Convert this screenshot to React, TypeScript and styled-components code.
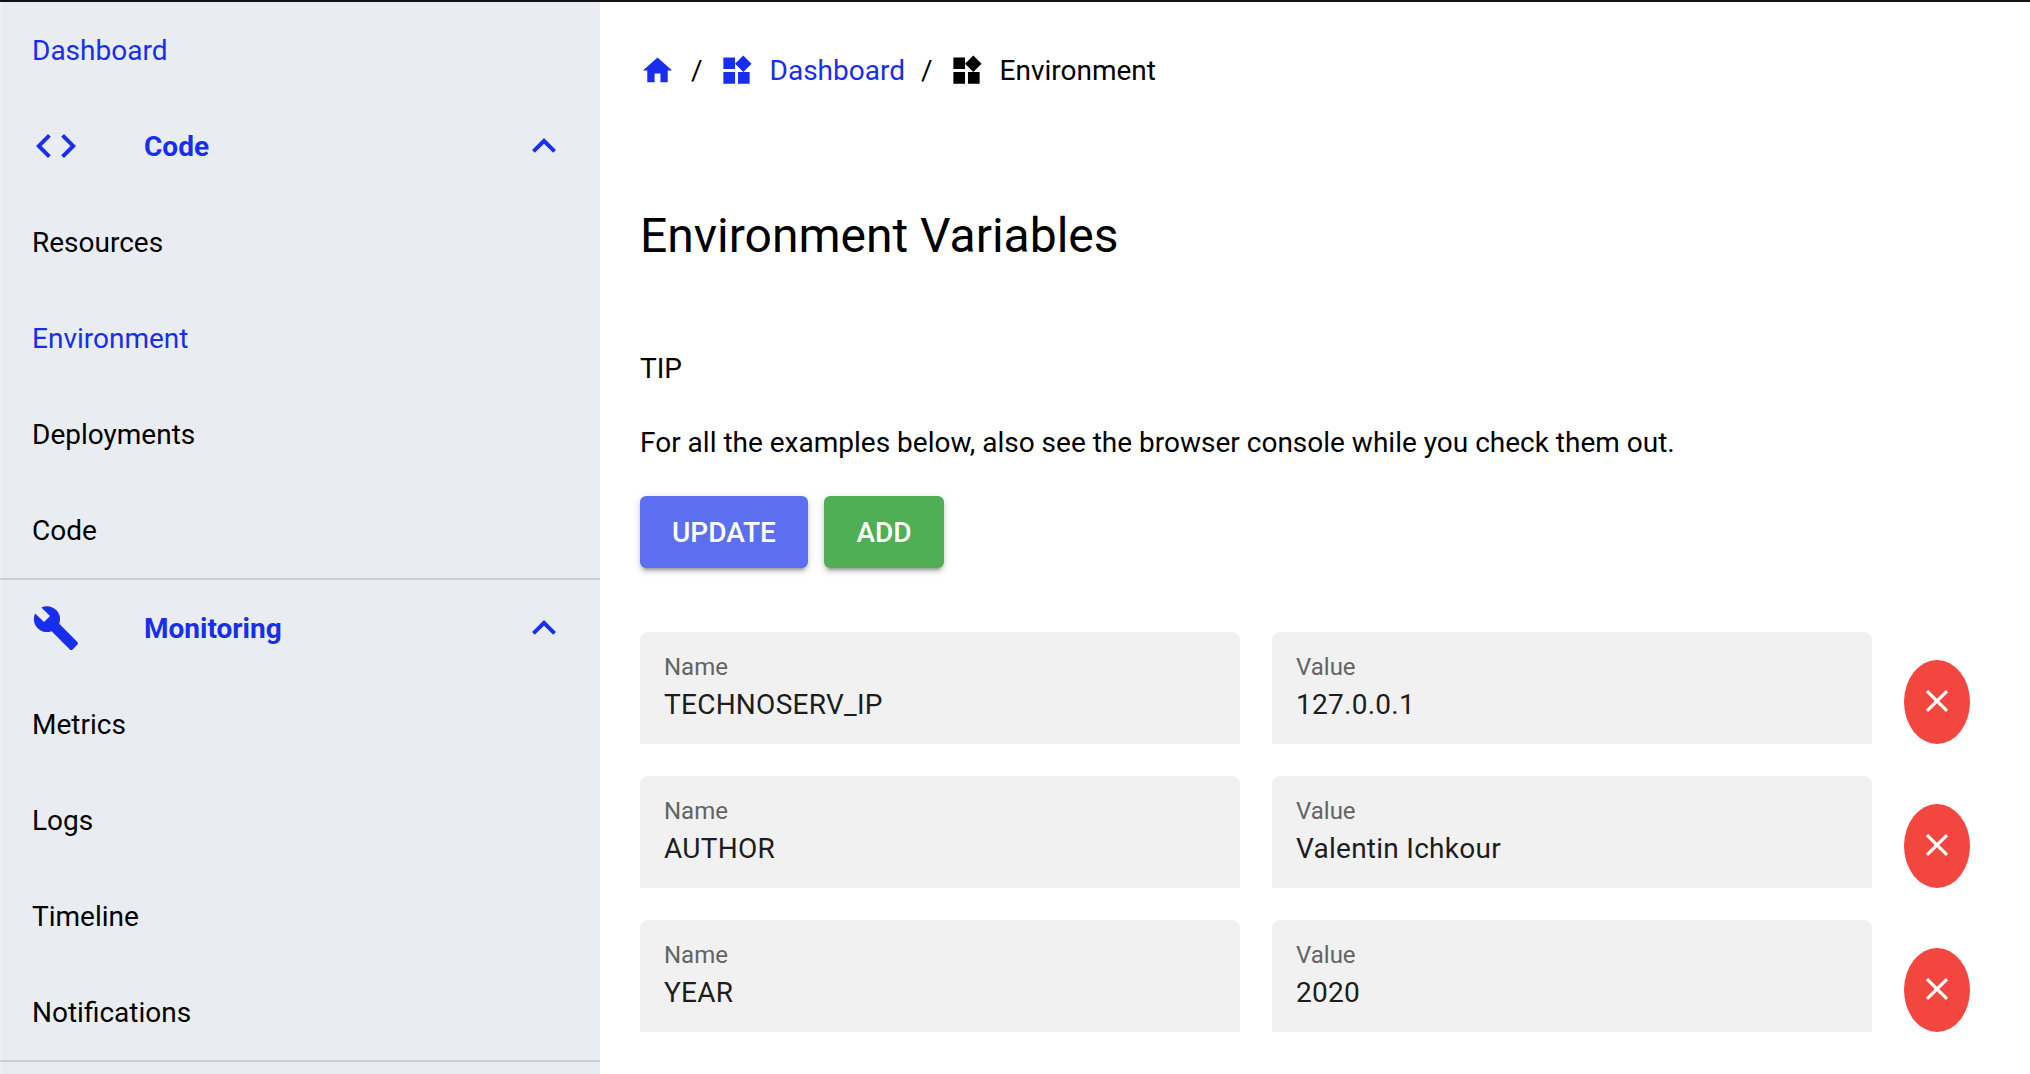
import React from "react";
import styled, { createGlobalStyle, css } from "styled-components";
import { MdBuild, MdClose, MdCode, MdHome, MdKeyboardArrowUp, MdWidgets } from "react-icons/md";

const BLUE = "#182eee";

const GlobalStyle = createGlobalStyle`
  * { box-sizing: border-box; }
  body { margin: 0; background: #fff; }
`;

const Page = styled.div`
  display: flex;
  height: 1074px;
  overflow: hidden;
  border-top: 2px solid #131313;
  font-family: Roboto, "Liberation Sans", sans-serif;
  font-size: 28px;
  color: #000;
`;

const Sidebar = styled.nav`
  width: 600px;
  flex: none;
  background: #e9edf2;
  box-shadow: inset 2px 0 #edf1f4;
`;

const Group = styled.section`
  border-bottom: 2px solid #cccdd0;
`;

const rowBase = css`
  display: flex;
  align-items: center;
  height: 96px;
  padding: 0 32px;
`;

const NavItem = styled.a<{ $active?: boolean }>`
  ${rowBase}
  color: ${(p) => (p.$active ? BLUE : "#000")};
`;

const GroupHeader = styled.div`
  ${rowBase}
  color: ${BLUE};
  font-weight: 700;

  svg { width: 48px; height: 48px; }
`;

const GroupTitle = styled.span`
  flex: 1;
  margin-left: 64px;
`;

const Main = styled.main`
  flex: 1;
  padding: 40px 60px 0 40px;
`;

const Breadcrumbs = styled.div`
  display: flex;
  align-items: center;
  height: 56px;
`;

const Crumb = styled.span<{ $link?: boolean }>`
  display: flex;
  align-items: center;
  gap: 16px;
  color: ${(p) => (p.$link ? BLUE : "#000")};

  svg { width: 35px; height: 35px; margin-top: 1px; }
`;

const Separator = styled.span`
  margin: 0 16px;
`;

const Title = styled.h1`
  margin: 106px 0 0;
  font-size: 48px;
  line-height: 64px;
  font-weight: 400;
`;

const Paragraph = styled.p<{ $top: number }>`
  margin: ${(p) => p.$top}px 0 0;
  line-height: 40px;
`;

const Actions = styled.div`
  display: flex;
  gap: 16px;
  margin-top: 33px;
`;

const Button = styled.button<{ $color: string; $width: number }>`
  width: ${(p) => p.$width}px;
  height: 72px;
  padding: 0;
  border: 0;
  border-radius: 6px;
  background: ${(p) => p.$color};
  color: #fff;
  font: 500 28px Roboto, sans-serif;
  box-shadow: 0 6px 2px -4px rgba(0, 0, 0, 0.2), 0 4px 4px rgba(0, 0, 0, 0.14), 0 2px 10px rgba(0, 0, 0, 0.12);
`;

const Variables = styled.div`
  display: flex;
  flex-direction: column;
  gap: 32px;
  margin-top: 64px;
`;

const VariableRow = styled.div`
  display: flex;
  align-items: flex-end;
  gap: 32px;
`;

const Field = styled.label`
  display: flex;
  flex-direction: column;
  width: 600px;
  height: 112px;
  padding: 19px 24px 0;
  border-radius: 8px 8px 0 0;
  background: #f1f1f1;
`;

const FieldLabel = styled.span`
  font-size: 24px;
  line-height: 32px;
  color: #646464;
`;

const FieldValue = styled.span`
  line-height: 40px;
  margin-top: 2px;
  letter-spacing: 0.009375em;
  color: #1d1d1d;
`;

const RemoveButton = styled.button`
  display: flex;
  align-items: center;
  justify-content: center;
  width: 66px;
  height: 84px;
  padding: 0 0 2px;
  border: 0;
  border-radius: 50%;
  background: #f2463f;
  color: #fff;

  svg { width: 38px; height: 38px; }
`;

const groups = [
  {
    title: "Code",
    Icon: MdCode,
    items: ["Resources", "Environment", "Deployments", "Code"],
  },
  {
    title: "Monitoring",
    Icon: MdBuild,
    items: ["Metrics", "Logs", "Timeline", "Notifications"],
  },
];

const variables = [
  { name: "TECHNOSERV_IP", value: "127.0.0.1" },
  { name: "AUTHOR", value: "Valentin Ichkour" },
  { name: "YEAR", value: "2020" },
];

export default function App() {
  return (
    <>
      <GlobalStyle />
      <Page>
        <Sidebar>
          <NavItem $active>Dashboard</NavItem>
          {groups.map(({ title, Icon, items }) => (
            <Group key={title}>
              <GroupHeader>
                <Icon />
                <GroupTitle>{title}</GroupTitle>
                <MdKeyboardArrowUp />
              </GroupHeader>
              {items.map((item) => (
                <NavItem key={item} $active={item === "Environment"}>{item}</NavItem>
              ))}
            </Group>
          ))}
        </Sidebar>
        <Main>
          <Breadcrumbs>
            <Crumb $link><MdHome /></Crumb>
            <Separator>/</Separator>
            <Crumb $link><MdWidgets /><span>Dashboard</span></Crumb>
            <Separator>/</Separator>
            <Crumb><MdWidgets /><span>Environment</span></Crumb>
          </Breadcrumbs>
          <Title>Environment Variables</Title>
          <Paragraph $top={81}>TIP</Paragraph>
          <Paragraph $top={34}>
            For all the examples below, also see the browser console while you check them out.
          </Paragraph>
          <Actions>
            <Button $color="#5d6ff1" $width={168}>UPDATE</Button>
            <Button $color="#50ae55" $width={120}>ADD</Button>
          </Actions>
          <Variables>
            {variables.map((v) => (
              <VariableRow key={v.name}>
                <Field>
                  <FieldLabel>Name</FieldLabel>
                  <FieldValue>{v.name}</FieldValue>
                </Field>
                <Field>
                  <FieldLabel>Value</FieldLabel>
                  <FieldValue>{v.value}</FieldValue>
                </Field>
                <RemoveButton aria-label="Remove"><MdClose /></RemoveButton>
              </VariableRow>
            ))}
          </Variables>
        </Main>
      </Page>
    </>
  );
}
